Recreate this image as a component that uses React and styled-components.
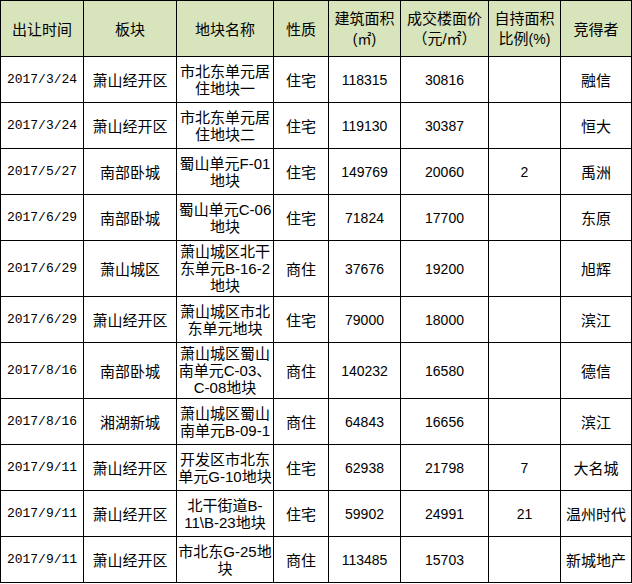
import React from "react";
import styled, { createGlobalStyle } from "styled-components";

const Global = createGlobalStyle`
  html, body {
    margin: 0;
    padding: 0;
    background: #fff;
  }
`;

const Table = styled.table`
  border-collapse: collapse;
  table-layout: fixed;
  width: 631px;
  font-family: "Liberation Sans", "Noto Sans CJK SC", sans-serif;
  font-size: 15px;
  color: #000;
`;

const HeadCell = styled.th`
  height: 55px;
  padding: 0;
  border: 1px solid #000;
  background: #d7e4bc;
  font-weight: normal;
  text-align: center;
  vertical-align: middle;
  white-space: nowrap;
`;

const Cell = styled.td`
  height: 41px;
  padding: 2px 0;
  border: 1px solid #000;
  text-align: center;
  vertical-align: middle;
  white-space: nowrap;
  font-size: ${(p) => (p.$mono ? "13px" : p.$num ? "14px" : "15px")};
  font-family: ${(p) =>
    p.$mono
      ? '"Liberation Mono", "DejaVu Sans Mono", monospace'
      : '"Liberation Sans", "Noto Sans CJK SC", sans-serif'};
`;

const Line = styled.div`
  height: ${(p) => p.$h || 17}px;
  line-height: ${(p) => p.$h || 17}px;
  display: flex;
  align-items: center;
  justify-content: center;
`;

const Small = styled.span`
  font-size: 14px;
`;

const widths = [83, 93, 97, 55, 72, 88, 72, 71];

const rows = [
  ["2017/3/24", "萧山经开区", ["市北东单元居", "住地块一"], "住宅", "118315", "30816", "", "融信"],
  ["2017/3/24", "萧山经开区", ["市北东单元居", "住地块二"], "住宅", "119130", "30387", "", "恒大"],
  ["2017/5/27", "南部卧城", ["蜀山单元F-01", "地块"], "住宅", "149769", "20060", "2", "禹洲"],
  ["2017/6/29", "南部卧城", ["蜀山单元C-06", "地块"], "住宅", "71824", "17700", "", "东原"],
  ["2017/6/29", "萧山城区", ["萧山城区北干", "东单元B-16-2", "地块"], "商住", "37676", "19200", "", "旭辉"],
  ["2017/6/29", "萧山经开区", ["萧山城区市北", "东单元地块"], "住宅", "79000", "18000", "", "滨江"],
  ["2017/8/16", "南部卧城", ["萧山城区蜀山", "南单元C-03、", "C-08地块"], "商住", "140232", "16580", "", "德信"],
  ["2017/8/16", "湘湖新城", ["萧山城区蜀山", "南单元B-09-1"], "商住", "64843", "16656", "", "滨江"],
  ["2017/9/11", "萧山经开区", ["开发区市北东", "单元G-10地块"], "住宅", "62938", "21798", "7", "大名城"],
  ["2017/9/11", "萧山经开区", ["北干街道B-", "11\\B-23地块"], "住宅", "59902", "24991", "21", "温州时代"],
  ["2017/9/11", "萧山经开区", ["市北东G-25地", "块"], "商住", "113485", "15703", "", "新城地产"],
];

function Lines({ items, h }) {
  return items.map((t, i) => (
    <Line key={i} $h={h}>
      {t}
    </Line>
  ));
}

export default function App() {
  return (
    <>
      <Global />
      <Table>
        <colgroup>
          {widths.map((w, i) => (
            <col key={i} style={{ width: w }} />
          ))}
        </colgroup>
        <thead>
          <tr>
            <HeadCell>出让时间</HeadCell>
            <HeadCell>板块</HeadCell>
            <HeadCell>地块名称</HeadCell>
            <HeadCell>性质</HeadCell>
            <HeadCell>
              <Lines h={20} items={["建筑面积", <Small key="a">(㎡)</Small>]} />
            </HeadCell>
            <HeadCell>
              <Lines h={20} items={["成交楼面价", "（元/㎡）"]} />
            </HeadCell>
            <HeadCell>
              <Lines h={20} items={["自持面积", <span key="b">比例<Small>(%)</Small></span>]} />
            </HeadCell>
            <HeadCell>竞得者</HeadCell>
          </tr>
        </thead>
        <tbody>
          {rows.map((r, i) => (
            <tr key={i}>
              <Cell $mono>{r[0]}</Cell>
              <Cell>{r[1]}</Cell>
              <Cell>
                <Lines items={r[2]} />
              </Cell>
              <Cell>{r[3]}</Cell>
              <Cell $num>{r[4]}</Cell>
              <Cell $num>{r[5]}</Cell>
              <Cell $num>{r[6]}</Cell>
              <Cell>{r[7]}</Cell>
            </tr>
          ))}
        </tbody>
      </Table>
    </>
  );
}
